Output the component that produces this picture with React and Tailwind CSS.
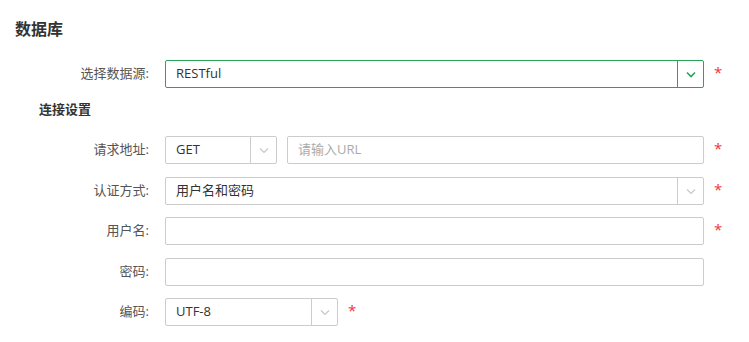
import React from "react";

const font = { fontFamily: '"Open Sans", "Noto Sans CJK SC", sans-serif' };

const Chevron = ({ green }) => (
  <svg width="12" height="12" viewBox="0 0 12 12" fill="none">
    <path
      d="M2 4.5 L6 8.5 L10 4.5"
      stroke={green ? "#27a35a" : "#c8c8c8"}
      strokeWidth={green ? "1.6" : "1.2"}
    />
  </svg>
);

const Star = () => (
  <span className="ml-[10px] w-[10px] text-[15px] leading-none text-[#f2333a] -mt-[3px]">*</span>
);

const Select = ({ value, width, green }) => (
  <div
    className={`flex h-[28px] rounded-[2px] border bg-white ${green ? "border-[#27a35a]" : "border-[#cccccc]"}`}
    style={{ width }}
  >
    <div className="flex flex-1 items-center pl-[10px] text-[13px] text-[#333]">{value}</div>
    <div
      className={`flex w-[26px] items-center justify-center border-l ${green ? "border-[#27a35a]" : "border-[#cccccc]"}`}
    >
      <Chevron green={green} />
    </div>
  </div>
);

const Input = ({ placeholder, className = "" }) => (
  <div className={`flex h-[28px] items-center rounded-[2px] border border-[#cccccc] bg-white pl-[10px] text-[13px] text-[#aaa] ${className}`}>
    {placeholder}
  </div>
);

const Row = ({ label, children, required, className = "" }) => (
  <div className={`flex items-center ${className}`}>
    <div className="w-[150px] pr-px text-right text-[13px] text-[#555]">{label}</div>
    <div className="ml-[15px] flex items-center">{children}</div>
    {required && <Star />}
  </div>
);

export default function App() {
  return (
    <div className="h-[342px] w-[749px] bg-white" style={font}>
      <div className="pl-[15px] pt-[17px] text-[16px] font-bold leading-[24px] text-[#333]">数据库</div>
      <Row label="选择数据源:" required className="mt-[19px]">
        <Select value="RESTful" width={539} green />
      </Row>
      <div className="mt-[11px] pl-[39px] text-[13px] font-bold leading-[20px] text-[#333]">连接设置</div>
      <Row label="请求地址:" required className="mt-[17px]">
        <Select value="GET" width={112} />
        <Input placeholder="请输入URL" className="ml-[10px] w-[417px]" />
      </Row>
      <Row label="认证方式:" required className="mt-[13px]">
        <Select value="用户名和密码" width={539} />
      </Row>
      <Row label="用户名:" required className="mt-[12px]">
        <Input className="w-[539px]" />
      </Row>
      <Row label="密码:" className="mt-[13px]">
        <Input className="w-[539px]" />
      </Row>
      <Row label="编码:" required className="mt-[12px]">
        <Select value="UTF-8" width={173} />
      </Row>
    </div>
  );
}
